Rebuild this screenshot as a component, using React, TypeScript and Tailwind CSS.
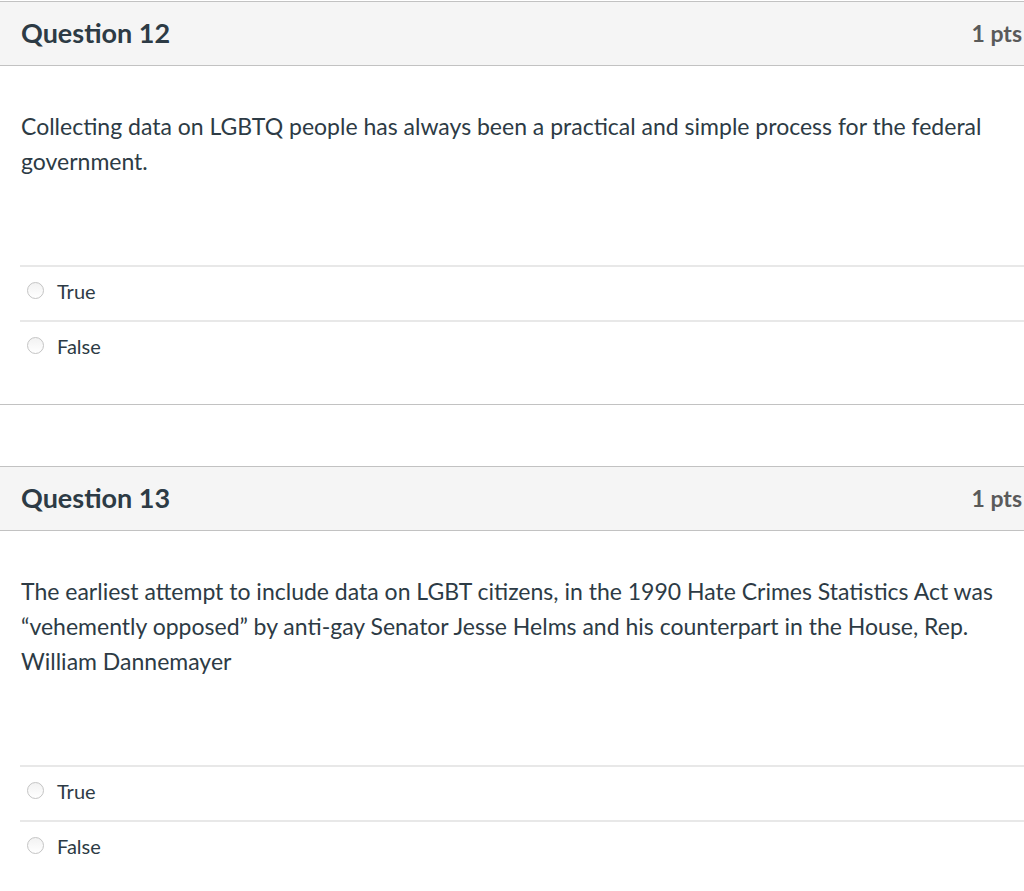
const questions = [
  {
    title: "Question 12",
    points: "1 pts",
    text: "Collecting data on LGBTQ people has always been a practical and simple process for the federal government.",
    answers: ["True", "False"],
  },
  {
    title: "Question 13",
    points: "1 pts",
    text: "The earliest attempt to include data on LGBT citizens, in the 1990 Hate Crimes Statistics Act was \u201cvehemently opposed\u201d by anti-gay Senator Jesse Helms and his counterpart in the House, Rep. William Dannemayer",
    answers: ["True", "False"],
  },
];

function Radio() {
  return (
    <span className="w-[17px] h-[17px] rounded-full border border-[#c4c4c4] bg-gradient-to-b from-[#f2f2f2] to-white shrink-0" />
  );
}

function QuestionCard({ q }: { q: (typeof questions)[number] }) {
  return (
    <div className="border-y border-[#c2c2c2] w-[1044px] -ml-px">
      <div className="h-16 bg-[#f5f5f5] border-b border-[#c2c2c2] flex items-center justify-between pl-[22px] pr-[21px]">
        <span className="text-[27px] font-bold text-[#2d3b45]">{q.title}</span>
        <span className="text-[23px] font-bold text-[#5a5a5a]">{q.points}</span>
      </div>
      <div className="pt-[43px] pl-[22px]">
        <p className="text-[23px] leading-[35px] text-[#2d3b45] w-[990px]">{q.text}</p>
      </div>
      <div className="mt-[86px] ml-[21px] pb-[29px]">
        {q.answers.map((a) => (
          <div key={a} className="h-[55px] border-t-2 border-[#e8e8e8] flex items-center pl-[7px] gap-[13px] pb-[6px]">
            <Radio />
            <span className="text-[20px] text-[#2d3b45]">{a}</span>
          </div>
        ))}
      </div>
    </div>
  );
}

export default function App() {
  return (
    <div className="w-[1024px] h-[891px] overflow-hidden bg-white pt-px font-['Lato',sans-serif]">
      <div className="flex flex-col gap-[61px]">
        {questions.map((q) => (
          <QuestionCard key={q.title} q={q} />
        ))}
      </div>
    </div>
  );
}
